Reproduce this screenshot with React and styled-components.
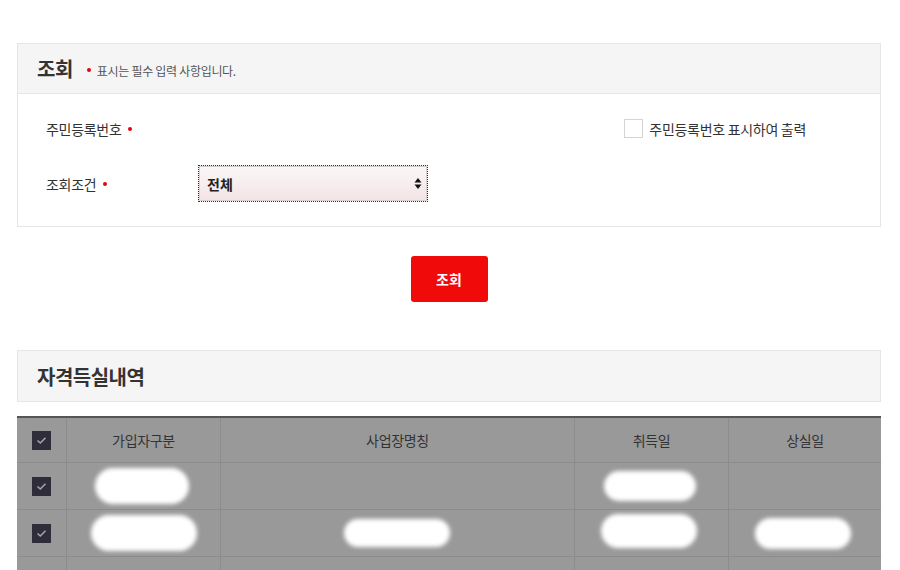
import React from "react";
import styled, { createGlobalStyle } from "styled-components";

const Global = createGlobalStyle`
  html, body { margin: 0; padding: 0; background: #fff; }
  body { font-family: "Noto Sans CJK KR", "Noto Sans", sans-serif; color: #333; }
  * { box-sizing: border-box; }
`;

const Page = styled.div`
  width: 864px;
  margin: 43px 0 0 17px;
  display: flex;
  flex-direction: column;
`;

const Panel = styled.section`
  border: 1px solid #e6e6e6;
  background: #fff;
`;

const PanelHead = styled.div`
  height: 50px;
  background: #f5f5f5;
  border-bottom: ${p => (p.$alone ? "none" : "1px solid #e6e6e6")};
  display: flex;
  align-items: center;
  padding-left: 19px;
  gap: 14px;
`;

const Title = styled.h2`
  margin: 0;
  font-size: 20px;
  font-weight: 700;
  color: #333;
  letter-spacing: -0.5px;
`;

const Note = styled.span`
  font-size: 12px;
  color: #555;
  display: flex;
  align-items: center;
  gap: 6px;
  padding-top: 3px;
  letter-spacing: -0.3px;
`;

const Dot = styled.span`
  width: 4px;
  height: 4px;
  border-radius: 50%;
  background: #e60012;
  display: inline-block;
`;

const PanelBody = styled.div`
  padding: 16px 28px 24px 28px;
  display: flex;
  flex-direction: column;
  gap: 18px;
`;

const Row = styled.div`
  display: flex;
  align-items: center;
  height: 37px;
`;

const Label = styled.div`
  width: 152px;
  font-size: 14px;
  color: #333;
  display: flex;
  align-items: center;
  gap: 7px;
  letter-spacing: -0.3px;
`;

const Spacer = styled.div`
  flex: 1;
`;

const CheckLabel = styled.label`
  display: flex;
  align-items: center;
  gap: 6px;
  font-size: 14px;
  color: #333;
  margin-right: 46px;
  letter-spacing: -0.3px;
`;

const EmptyBox = styled.span`
  width: 19px;
  height: 19px;
  border: 1px solid #d4d4d4;
  background: #fff;
  display: inline-block;
`;

const SelectWrap = styled.div`
  position: relative;
  width: 230px;
  height: 37px;
`;

const Select = styled.div`
  width: 100%;
  height: 100%;
  border: 1px dotted #333;
  background: linear-gradient(#fbf7f7, #f2e4e6);
  box-shadow: inset 0 0 0 1px #d9cfd1;
  font-size: 14px;
  font-weight: 700;
  color: #222;
  display: flex;
  align-items: center;
  padding-left: 8px;
`;

const Arrows = styled.svg`
  position: absolute;
  right: 6px;
  top: 12px;
`;

const ButtonBar = styled.div`
  display: flex;
  justify-content: center;
  padding: 29px 0 48px;
`;

const Primary = styled.button`
  width: 77px;
  height: 46px;
  border: none;
  border-radius: 3px;
  background: #f00a0a;
  color: #fff;
  font-family: inherit;
  font-size: 14px;
  font-weight: 700;
`;

const Table = styled.div`
  margin-top: 14px;
  border-top: 2px solid #555;
  background: #999;
  display: grid;
  grid-template-columns: 50px 154px 354px 154px 152px;
  grid-template-rows: 45px;
  grid-auto-rows: 47px;
`;

const Cell = styled.div`
  border-right: ${p => (p.$last ? "none" : "1px solid #8c8c8c")};
  border-bottom: 1px solid #8c8c8c;
  display: flex;
  align-items: center;
  justify-content: center;
  font-size: 14px;
  color: #333;
  position: relative;
  letter-spacing: -0.3px;
`;

const DarkCheck = styled.span`
  width: 19px;
  height: 19px;
  background: #2e2d39;
  display: flex;
  align-items: center;
  justify-content: center;
`;

const Blot = styled.span`
  width: ${p => p.$w}px;
  height: ${p => p.$h || 32}px;
  background: #fff;
  border-radius: 18px;
  filter: blur(2px);
  transform: translate(${p => p.$dx || 0}px, ${p => p.$dy || 0}px);
  display: inline-block;
`;

const Tick = () => (
  <svg width="11" height="9" viewBox="0 0 11 9">
    <path d="M1.5 4.5 L4.3 7 L9.5 1.8" fill="none" stroke="#a4a4b0" strokeWidth="1.6" />
  </svg>
);

const Check = () => (
  <DarkCheck>
    <Tick />
  </DarkCheck>
);

const rows = [
  [<Check />, <Blot $w={94} $h={36} $dx={-2} />, null, <Blot $w={92} $h={30} $dx={-2} />, null],
  [<Check />, <Blot $w={106} $h={36} $dx={0} />, <Blot $w={106} $h={28} $dx={-1} />, <Blot $w={96} $h={34} $dx={-3} $dy={-2} />, <Blot $w={96} $h={31} $dx={-2} />],
  [null, null, null, null, null],
];

export default function App() {
  return (
    <>
      <Global />
      <Page>
        <Panel>
          <PanelHead>
            <Title>조회</Title>
            <Note>
              <Dot />
              표시는 필수 입력 사항입니다.
            </Note>
          </PanelHead>
          <PanelBody>
            <Row>
              <Label>
                주민등록번호 <Dot />
              </Label>
              <Spacer />
              <CheckLabel>
                <EmptyBox />
                주민등록번호 표시하여 출력
              </CheckLabel>
            </Row>
            <Row>
              <Label>
                조회조건 <Dot />
              </Label>
              <SelectWrap>
                <Select>전체</Select>
                <Arrows width="8" height="13" viewBox="0 0 8 13">
                  <path d="M4 1 L7.5 5.5 H0.5 Z" fill="#111" />
                  <path d="M4 12 L7.5 7.5 H0.5 Z" fill="#111" />
                </Arrows>
              </SelectWrap>
            </Row>
          </PanelBody>
        </Panel>

        <ButtonBar>
          <Primary>조회</Primary>
        </ButtonBar>

        <Panel>
          <PanelHead $alone>
            <Title>자격득실내역</Title>
          </PanelHead>
        </Panel>

        <Table>
          <Cell><Check /></Cell>
          <Cell>가입자구분</Cell>
          <Cell>사업장명칭</Cell>
          <Cell>취득일</Cell>
          <Cell $last>상실일</Cell>
          {rows.map((r, i) =>
            r.map((c, j) => (
              <Cell key={`${i}-${j}`} $last={j === 4}>
                {c}
              </Cell>
            ))
          )}
        </Table>
      </Page>
    </>
  );
}
